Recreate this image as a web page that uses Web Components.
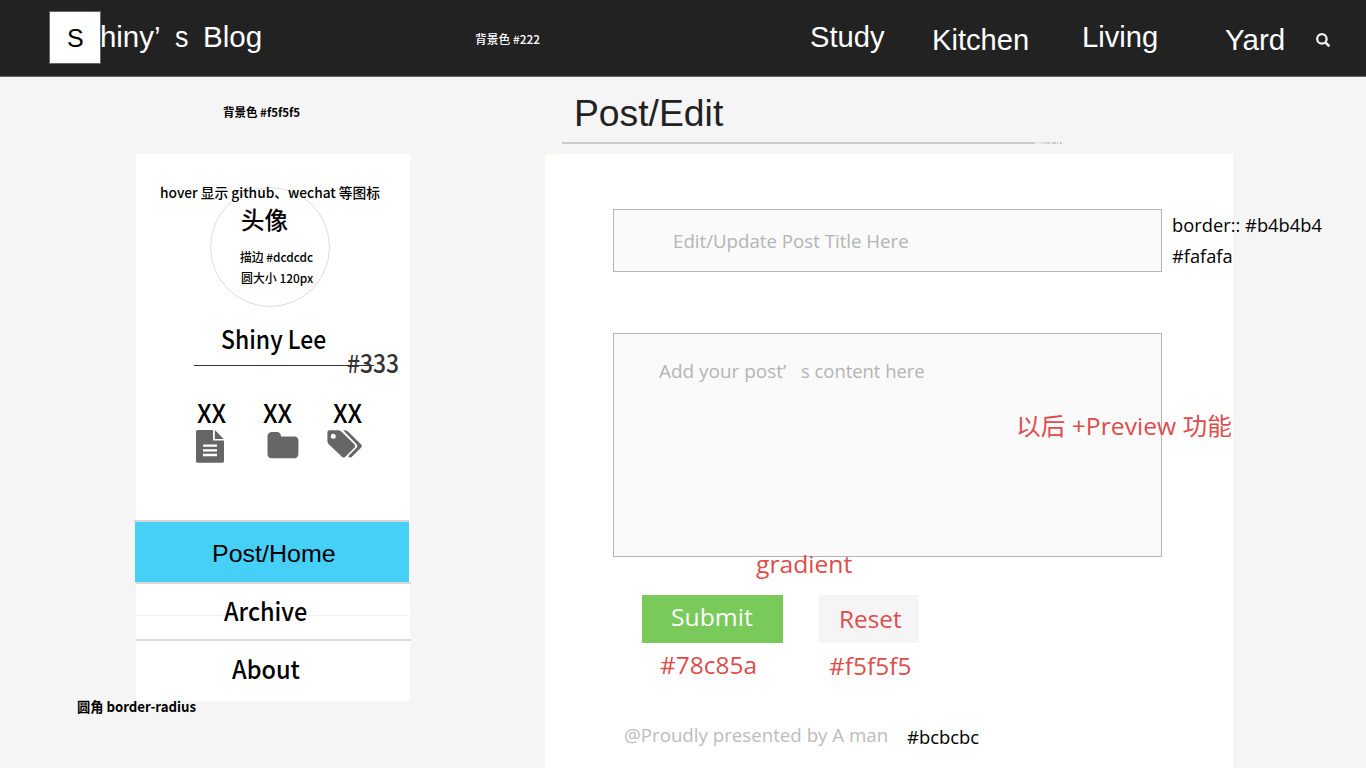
<!DOCTYPE html>
<html lang="zh-CN">
<head>
<meta charset="utf-8">
<title>Shiny’s Blog</title>
<style>
html,body{margin:0;height:768px;overflow:hidden;background:#f5f5f5}
</style>
</head>
<body>
<blog-page></blog-page>
<script>
const FONTS = {
  arial: ['400', '"Liberation Sans", Arial, sans-serif'],
  ui: ['400', '"Open Sans", "Noto Sans CJK SC", sans-serif'],
  cjk: ['500', '"Noto Sans CJK SC", sans-serif'],
  cjkb: ['700', '"Noto Sans CJK SC", sans-serif']
};
const pen = document.createElement('canvas').getContext('2d');

/* One line of text whose ink is `w` wide and whose baseline sits `b` below the top of its box. */
class FitText extends HTMLElement {
  connectedCallback() {
    if (this.shadowRoot) return;
    const w = +this.getAttribute('w'), b = +this.getAttribute('b'), size = +this.getAttribute('size');
    const [weight, family] = FONTS[this.getAttribute('face') || 'ui'];
    pen.font = `${weight} ${size}px ${family}`;
    const m = pen.measureText(this.textContent);
    const k = w / (m.actualBoundingBoxRight + m.actualBoundingBoxLeft);
    const lh = 2 * b - m.fontBoundingBoxAscent + m.fontBoundingBoxDescent;
    this.attachShadow({mode: 'open'}).innerHTML = `<style>
      :host{display:block;flex:none;width:${w}px;height:${b}px;font:${weight} ${size}px/${lh}px ${family};white-space:pre}
      span{display:inline-block;vertical-align:top;transform-origin:0 0;transform:translateX(${m.actualBoundingBoxLeft * k}px) scaleX(${k})}
    </style><span><slot></slot></span>`;
  }
}
customElements.define('fit-text', FitText);

function define(name, html) {
  const t = document.createElement('template');
  t.innerHTML = html;
  customElements.define(name, class extends HTMLElement {
    constructor() {
      super();
      this.attachShadow({mode: 'open'}).append(t.content.cloneNode(true));
    }
  });
}

/* Designer's remark floating over the page. */
customElements.define('design-note', class extends HTMLElement {
  connectedCallback() {
    if (this.shadowRoot) return;
    const a = n => this.getAttribute(n);
    this.attachShadow({mode: 'open'}).innerHTML = `<style>
      :host{position:absolute;z-index:2;left:${a('x')}px;top:${a('base') - 30}px;color:${a('ink') || '#000'}}
    </style><fit-text w="${a('w')}" b="30" size="${a('size')}" face="${a('face') || 'ui'}">${this.textContent}</fit-text>`;
  }
});

define('search-icon', `<style>:host{display:block;width:16px;height:16px}svg{display:block}</style>
<svg width="16" height="16" viewBox="0 0 16 16" fill="none" stroke="#f0f0f0"><circle cx="6.9" cy="6.9" r="4.7" stroke-width="2.3"/><path d="M10.3 10.4 14.4 14.4" stroke-width="2.7"/></svg>`);

define('site-header', `<style>
:host{display:flex;box-sizing:border-box;height:77px;background:#222;border-bottom:1px solid #666;color:#fff;align-items:flex-start}
.logo{box-sizing:border-box;width:52px;height:53px;margin:11px 0 0 49px;border:1px solid #666;background:#fff;color:#000;padding-left:18px}
.brand{display:flex;margin-left:1px;width:709px}
nav{display:flex}
search-icon{margin:32px 0 0 31px}
</style>
<div class="logo"><fit-text face="arial" size="25" w="15" b="35">S</fit-text></div>
<div class="brand"><fit-text face="arial" size="29" w="57" b="47">hiny’</fit-text><fit-text style="margin-left:16px" face="arial" size="29" w="13" b="47">s</fit-text><fit-text style="margin-left:17px" face="arial" size="29" w="56" b="47">Blog</fit-text></div>
<nav><fit-text face="arial" size="29" w="74" b="47">Study</fit-text><fit-text style="margin-left:49px" face="arial" size="29" w="94" b="50">Kitchen</fit-text><fit-text style="margin-left:56px" face="arial" size="29" w="73" b="47">Living</fit-text><fit-text style="margin-left:68px" face="arial" size="29" w="59" b="50">Yard</fit-text></nav>
<search-icon></search-icon>`);

define('stat-item', `<style>:host{display:block}div{display:flex;margin-top:7px}</style><slot name="count"></slot><div><slot></slot></div>`);

define('profile-card', `<style>
:host{display:block;height:366px;position:relative}
.avatar{box-sizing:border-box;width:120px;height:120px;border:1px solid #dcdcdc;border-radius:50%;margin:0 0 0 74px}
.wrap{padding-top:33px}
.name{margin:12px 0 0 86px}
.rule{width:180px;height:1px;background:#333;margin:16px 0 0 58px}
.stats{display:flex;margin:28px 0 0 61px}
svg{display:block}
</style>
<div class="wrap"><div class="avatar"></div></div>
<div class="name"><fit-text face="cjk" size="25" w="104" b="30">Shiny Lee</fit-text></div>
<div class="rule"></div>
<div class="stats">
<stat-item style="width:66px"><fit-text slot="count" face="cjk" size="25.5" w="29" b="29">XX</fit-text>
<svg style="margin-left:-1px" width="29" height="33" viewBox="0 0 29 33" fill="#666"><path d="M1.5 0H17V10.5H28V31Q28 32.7 26.5 32.7H1.5Q0 32.7 0 31V1.5Q0 0 1.5 0Z"/><path d="M18.8 0 27.8 9H18.8Z"/><path d="M7 15.6H21M7 20.4H21M7 25H21" stroke="#fff" stroke-width="2.3"/></svg></stat-item>
<stat-item style="width:70px"><fit-text slot="count" face="cjk" size="25.5" w="29" b="29">XX</fit-text>
<svg style="margin:2px 0 0 4px" width="32" height="27" viewBox="0 0 32 27" fill="#666"><path d="M4.5 0H9.5Q14 .2 14 4.6H27.5Q31.4 4.8 31.4 8.8V22Q31.2 26 27.5 26.3H4.5Q.5 26 .5 22V4.3Q.7 .3 4.5 0Z"/></svg></stat-item>
<stat-item><fit-text slot="count" face="cjk" size="25.5" w="29" b="29">XX</fit-text>
<svg style="margin-left:-6px" width="36" height="29" viewBox="0 0 36 29"><path fill="#666" fill-rule="evenodd" d="M2.2 .3H11.8L14 1.3 27.6 14.6Q28.8 16 27.6 17.4L18 27Q16.7 28 15.2 27L1.3 13.8 .4 11.5V2.2Q.6 .5 2.2 .3ZM6.3 3.8A2.5 2.5 0 1 0 6.3 8.8A2.5 2.5 0 0 0 6.3 3.8Z"/><path fill="#666" d="M16.2 .3H18.4Q20 .5 21.2 1.7L34.2 14.6Q35.5 16 34.2 17.4L24.6 27Q23.4 28 22 27L21.2 26.2 29.8 17.6Q31.2 16 29.8 14.4Z"/></svg></stat-item>
</div>`);

define('side-menu', `<style>
:host{display:block}
.item{display:block;border-top:2px solid #dadada;box-sizing:border-box;width:275px}
.home{margin-left:-2px;height:62px;border-top-color:#d0d4d6}
.fill{background:#46cff7;height:60px;margin-left:1px;padding-left:78px;box-sizing:border-box}
.archive{height:57px;padding-left:88px;background:linear-gradient(#f2f2f2,#f2f2f2) 0 31px/274px 1px no-repeat}
.about{height:60px;padding-left:96px}
</style>
<div class="item home"><div class="fill"><fit-text style="margin-left:.7px" face="arial" size="24.5" w="121" b="40">Post/Home</fit-text></div></div>
<div class="item archive"><fit-text face="cjk" size="25" w="83" b="37">Archive</fit-text></div>
<div class="item about"><fit-text face="cjk" size="25" w="68" b="38">About</fit-text></div>`);

define('side-bar', `<style>:host{display:block;width:274px;height:547px;margin:77px 0 0 136px;background:#fff}</style>
<profile-card></profile-card><side-menu></side-menu>`);

define('text-field', `<style>:host{display:flex;box-sizing:border-box;width:549px;background:#fafafa;border:1px solid #b4b4b4;color:#b4b4b4}</style><slot></slot>`);

define('post-editor', `<style>
:host{display:block;margin-left:135px;width:688px}
.head{height:65px;padding-left:32px;color:#222}
.rule{height:2px;width:500px;margin-left:17px;background:linear-gradient(90deg,#ccc 473px,#e7e7e7 473px 482px,#ccc 482px 484px,#eee 484px 485px,#ccc 485px 488px,#eee 488px 490px,#ccc 490px 494px,#eee 494px 495px,#ccc 495px 496px,#eee 496px 498px,#ccc 498px)}
.panel{margin-top:10px;height:614px;background:linear-gradient(#ffffe0,#ffffe0) 0 0/13px 1px no-repeat #fff;box-sizing:border-box;padding:55px 0 0 68px}
.title{height:63px;padding-left:59.5px}
.body{height:224px;margin-top:61px;padding-left:45px}
.actions{display:flex;margin:38px 0 0 29px;gap:36px}
.btn{height:48px;box-sizing:border-box}
.submit{width:141px;background:#79c95b;color:#fff;padding-left:30px}
.reset{width:100px;background:#f5f5f5;color:#de4c4c;padding-left:22px}
footer{margin:69px 0 0 12px;color:#bcbcbc}
</style>
<div class="head"><fit-text face="arial" size="37" w="147" b="49">Post/Edit</fit-text></div>
<div class="rule"></div>
<div class="panel">
<text-field class="title"><fit-text size="19" w="234" b="38">Edit/Update Post Title Here</fit-text></text-field>
<text-field class="body"><fit-text size="19" w="127" b="44">Add your post’</fit-text><fit-text style="margin-left:14.5px" size="19" w="123" b="44">s content here</fit-text></text-field>
<div class="actions"><div class="btn submit"><fit-text size="24.5" w="81" b="31">Submit</fit-text></div><div class="btn reset"><fit-text size="24.5" w="61" b="33">Reset</fit-text></div></div>
<footer><fit-text size="19" w="262.5" b="30">@Proudly presented by A man</fit-text></footer>
</div>`);

define('blog-page', `<style>
:host{display:block;position:relative;width:1366px;height:768px;overflow:hidden;background:#f5f5f5}
main{display:flex;align-items:flex-start}
</style>
<site-header></site-header>
<main><side-bar></side-bar><post-editor></post-editor></main>
<design-note x="474.5" base="44" w="65" size="12" face="cjk" ink="#fff">背景色 #222</design-note>
<design-note x="222.5" base="117" w="77" size="12" face="cjkb">背景色 #f5f5f5</design-note>
<design-note x="161" base="198" w="219" size="14" face="cjk">hover 显示 github、wechat 等图标</design-note>
<design-note x="241.5" base="229" w="46" size="24" face="cjk">头像</design-note>
<design-note x="240" base="262" w="73" size="12" face="cjk">描边 #dcdcdc</design-note>
<design-note x="240.5" base="283" w="73" size="12" face="cjk">圆大小 120px</design-note>
<design-note x="346.5" base="373" w="51" size="25" face="cjk" ink="#333">#333</design-note>
<design-note x="77.5" base="712" w="118" size="14" face="cjkb">圆角 border-radius</design-note>
<design-note x="1173" base="232" w="149" size="19">border:: #b4b4b4</design-note>
<design-note x="1172" base="263" w="60" size="19">#fafafa</design-note>
<design-note x="1018" base="435" w="214" size="24" ink="#de4c4c">以后 +Preview 功能</design-note>
<design-note x="756" base="573" w="96.5" size="24.5" ink="#de4c4c">gradient</design-note>
<design-note x="659.5" base="674" w="95.5" size="24.5" ink="#de4c4c">#78c85a</design-note>
<design-note x="829" base="675" w="81.5" size="24.5" ink="#de4c4c">#f5f5f5</design-note>
<design-note x="907" base="744" w="72" size="19">#bcbcbc</design-note>`);
</script>
</body>
</html>
